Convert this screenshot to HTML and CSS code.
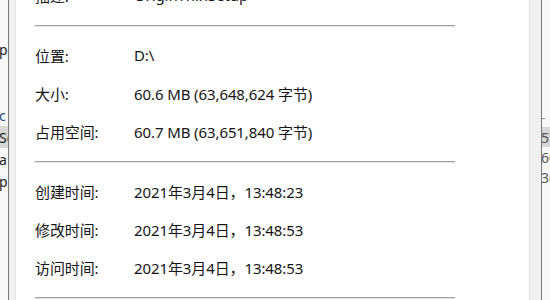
FILE: index.html
```html
<!DOCTYPE html>
<html lang="zh-CN">
<head>
<meta charset="utf-8">
<link rel="stylesheet" href="styles.css">
</head>
<body>
<div class="explorer explorer-left">
  <div class="ex-row ex-first"><span>pp</span></div>
  <div class="ex-row ex-gap"></div>
  <div class="ex-row"><span class="blue">c</span></div>
  <div class="ex-row sel"><span>Se</span></div>
  <div class="ex-row"><span>a</span></div>
  <div class="ex-row"><span>p</span></div>
</div>
<div class="edge"></div>
<div class="dialog">
  <div class="page">
    <div class="content">
      <div class="row"><span class="label">描述:</span><span class="value">OriginThinSetup</span></div>
      <div class="sep"></div>
      <div class="row"><span class="label">位置:</span><span class="value">D:\</span></div>
      <div class="row"><span class="label">大小:</span><span class="value">60.6 MB (63,648,624 字节)</span></div>
      <div class="row"><span class="label">占用空间:</span><span class="value">60.7 MB (63,651,840 字节)</span></div>
      <div class="sep"></div>
      <div class="row"><span class="label">创建时间:</span><span class="value">2021年3月4日，13:48:23</span></div>
      <div class="row"><span class="label">修改时间:</span><span class="value">2021年3月4日，13:48:53</span></div>
      <div class="row"><span class="label">访问时间:</span><span class="value">2021年3月4日，13:48:53</span></div>
      <div class="sep"></div>
    </div>
  </div>
</div>
<div class="edge"></div>
<div class="explorer explorer-right">
  <div class="ex-row rx-first"><span class="dash">-</span></div>
  <div class="ex-row rx sel"><span>57</span></div>
  <div class="ex-row rx"><span>60</span></div>
  <div class="ex-row rx"><span>30</span></div>
</div>
</body>
</html>
```
FILE: styles.css
```css
html, body {
  margin: 0;
  padding: 0;
}
body {
  width: 550px;
  height: 300px;
  overflow: hidden;
  display: flex;
  background: #ffffff;
  font-family: "Noto Sans", "Noto Sans CJK SC", sans-serif;
  color: #151515;
}
.explorer {
  width: 8px;
  flex: none;
  overflow: hidden;
  background: #f8f8f8;
  display: flex;
  flex-direction: column;
  font-size: 14px;
  color: #222;
}
.ex-row {
  height: 22px;
  flex: none;
  display: flex;
  align-items: center;
  white-space: nowrap;
}
.ex-first { margin-top: 38px; }
.ex-gap { height: 44px; }
.ex-row span { margin-left: -1px; }
.blue { color: #2a4f7a; }
.sel { background: #d6d6d6; }
.explorer-right { color: #555; }
.rx-first { margin-top: 107px; height: 20px; }
.rx { height: 20px; }
.dash { color: #999; }
.edge {
  width: 1px;
  flex: none;
  background: #767676;
}
.dialog {
  flex: 1;
  display: flex;
  background: #f0f0f0;
  padding: 0 11px 0 6px;
}
.page {
  flex: 1;
  background: #ffffff;
  border-left: 1px solid #e6e6e6;
  border-right: 1px solid #e2e2e2;
  padding-left: 19px;
}
.content {
  width: 420px;
  margin-top: -24px;
}
.row {
  display: grid;
  grid-template-columns: 99px auto;
  height: 38px;
  align-items: center;
  font-size: 15px;
  letter-spacing: -0.1px;
}
.sep {
  height: 1px;
  background: #a0a0a0;
  border-bottom: 1px solid #e4e4e4;
  margin: 11px 0 9px;
}
```
